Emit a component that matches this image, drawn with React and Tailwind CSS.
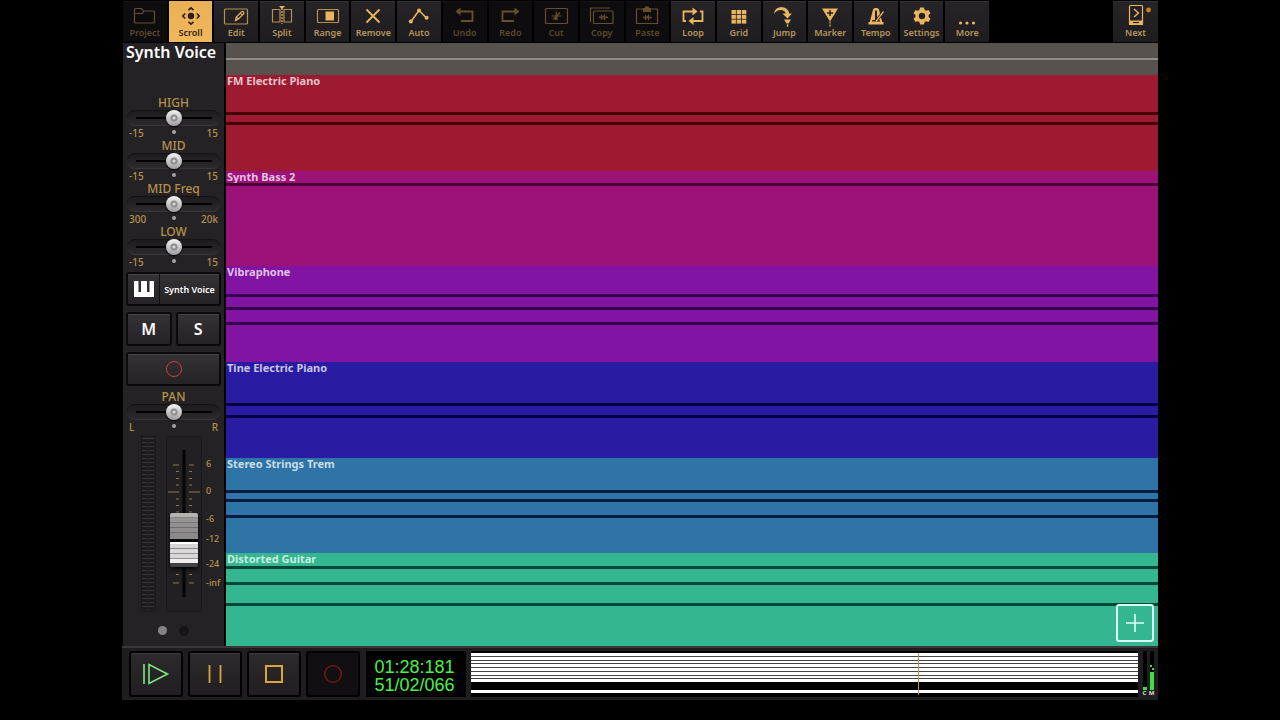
import React from "react";

const TOOLS = [
  { name: "Project", state: "off" },
  { name: "Scroll", state: "active" },
  { name: "Edit" },
  { name: "Split" },
  { name: "Range" },
  { name: "Remove" },
  { name: "Auto" },
  { name: "Undo", state: "off" },
  { name: "Redo", state: "off" },
  { name: "Cut", state: "off" },
  { name: "Copy", state: "off" },
  { name: "Paste", state: "off" },
  { name: "Loop" },
  { name: "Grid" },
  { name: "Jump" },
  { name: "Marker" },
  { name: "Tempo" },
  { name: "Settings" },
  { name: "More" },
];

const LANES = [
  { name: "FM Electric Piano", box: "h-[96px] bg-[#9d1a31]", line: "bg-[#450008]", notes: [37, 47] },
  { name: "Synth Bass 2", box: "h-[95px] bg-[#9d1279]", line: "bg-[#480037]", notes: [12] },
  { name: "Vibraphone", box: "h-[96px] bg-[#8214a4]", line: "bg-[#35004a]", notes: [28, 41, 56] },
  { name: "Tine Electric Piano", box: "h-[96px] bg-[#291ca2]", line: "bg-[#05003f]", notes: [41, 53] },
  { name: "Stereo Strings Trem", box: "h-[95px] bg-[#2e74a6]", line: "bg-[#051c42]", notes: [32, 41, 57] },
  { name: "Distorted Guitar", box: "h-[93px] bg-[#34b791]", line: "bg-[#05463a]", notes: [13, 29, 50] },
];

const EQ = [
  { name: "HIGH", low: "-15", high: "15" },
  { name: "MID", low: "-15", high: "15" },
  { name: "MID Freq", low: "300", high: "20k" },
  { name: "LOW", low: "-15", high: "15" },
];

const WAVE = "M-4 0h1M-3 -1v2M-1.5 -2.5v5M0 -1.5v3M1.5 -3v6M3 -1v2M3 0h2";

const ICONS = {
  Project: (
    <path d="M3.5 21V7.5q0-1 1-1h6l2 2.5h10q1 0 1 1V20q0 1-1 1h-18q-1 0-1-1M3.5 11.5h8l1.5-2.5" />
  ),
  Scroll: (
    <>
      <circle cx="14" cy="14" r="3.2" fill="currentColor" stroke="none" />
      <path strokeWidth="1.6" d="M11.5 8.2 14 5.8l2.5 2.4M11.5 19.8l2.500 2.400 2.500-2.400M8.200 11.500 5.800 14l2.400 2.500M19.800 11.500l2.400 2.500-2.400 2.500" />
    </>
  ),
  Edit: (
    <>
      <rect x="2.5" y="7" width="23" height="15" rx="1" strokeOpacity="0.75" />
      <path d="m13.5 18.500 .8-3.5 5.2-5.2q1-1 2 0t0 2l-5.2 5.2zM18.2 11.1l2 2M14.4 15.1l2 2" />
    </>
  ),
  Split: (
    <>
      <path strokeOpacity="0.75" d="M12 7.5H4.500v12.500H12zM16 7.500h7.500v12.500H16z" />
      <path strokeDasharray="2 1" d="M14 6v16" />
      <path fill="currentColor" stroke="none" d="M11 4h6l-3 3.200z" />
    </>
  ),
  Range: (
    <>
      <rect x="3.5" y="7.500" width="21" height="13" rx="1" strokeOpacity="0.75" />
      <rect x="11.5" y="9.500" width="8.5" height="9" fill="currentColor" stroke="none" />
    </>
  ),
  Remove: <path strokeWidth="1.8" d="m7.5 7.5 13 13M20.5 7.5l-13 13" />,
  Auto: (
    <>
      <path strokeWidth="1.5" d="m6 19.5 8-11 7.5 7.5" />
      <g fill="currentColor" stroke="none">
        <circle cx="5.8" cy="19.6" r="2" />
        <circle cx="14" cy="8.5" r="2" />
        <circle cx="21.6" cy="15.8" r="2" />
      </g>
    </>
  ),
  Undo: (
    <>
      <path strokeWidth="1.8" d="M8 9.5h13.5v9.500H10" />
      <path fill="currentColor" stroke="none" d="m4.5 9.5 5-4v8z" />
    </>
  ),
  Redo: (
    <>
      <path strokeWidth="1.8" d="M19 9.5H6.5V19H18" />
      <path fill="currentColor" stroke="none" d="m23.5 9.5-5-4v8z" />
    </>
  ),
  Cut: (
    <>
      <rect x="3.5" y="6.500" width="22" height="15" rx="1" />
      <path d="M9.5 14h10M14.5 10l-1 8M18 10.500l-7 7M15 14v4" />
    </>
  ),
  Copy: (
    <>
      <rect x="5.5" y="9" width="19.5" height="12.5" rx="1" />
      <path d="M2.5 20V6H22" />
      <path transform="translate(15 15.300)" d={WAVE} />
    </>
  ),
  Paste: (
    <>
      <path d="M10 7H3.5v14.500h21V7H18" />
      <path fill="currentColor" stroke="none" d="M10 6h2V4.500h4V6h2v4h-8z" />
      <path transform="translate(14 15.500)" d={WAVE} />
    </>
  ),
  Loop: (
    <>
      <path strokeWidth="1.8" d="M7 19H4.500V9.500h10M21 9.500h2.500V19h-10" />
      <path fill="currentColor" stroke="none" d="m18.500 9.500-5-4v8zM9.500 19l5-4v8z" />
    </>
  ),
  Grid: (
    <g fill="currentColor" stroke="none">
      {[0, 1, 2].map((r) =>
        [0, 1, 2].map((c) => <rect key={`${r}${c}`} x={6.5 + c * 5.2} y={8 + r * 4.8} width="4.4" height="4" />)
      )}
    </g>
  ),
  Jump: (
    <g fill="currentColor" stroke="none">
      <path d="M4 12Q4.500 5.500 11 5q7 0 8.200 6.500h2.800l-4.500 5-5-5h3.200q-1-3.500-5-3.500Q6.500 8 4 12z" />
      <path d="M14 17.500h7l-2.500 4h-2z" />
      <rect x="16.900" y="22.300" width="1.300" height="2.500" />
    </g>
  ),
  Marker: (
    <>
      <path fill="currentColor" stroke="none" d="M6 6.5h16l-8 13z" />
      <path className="text-[#222023]" strokeWidth="1.5" d="M14 8v6M11 11h6" />
      <path d="M14 19.500v2M14 22.500v2" />
    </>
  ),
  Tempo: (
    <>
      <path
        fill="currentColor"
        stroke="none"
        fillRule="evenodd"
        d="M6.500 22.500v-2.500h1.300L11 7.500q.6-1.500 2-1.500h2q1.400 0 2 1.500l3.200 12.500h1.300v2.500zM13 8.500v9.500h2V8.500zM10 19.500h8l-.4-1.500h-7.200z"
      />
      <path stroke="#222023" strokeWidth="3" d="m15 18 6-7.500" />
      <path strokeWidth="1.3" d="M14 19.500 21.500 9.500" />
    </>
  ),
  Settings: (
    <g stroke="none" fill="currentColor">
      <path
        fillRule="evenodd"
        d="M12 5.500h4l.6 2.500 1.500.8 2.400-.9 2 3.400-1.900 1.800v1.800l1.900 1.800-2 3.400-2.400-.9-1.500.8-.6 2.500h-4l-.6-2.500-1.500-.8-2.400.9-2-3.400 1.900-1.800v-1.800l-1.900-1.800 2-3.400 2.400.9 1.500-.8zM14 10.800a3.200 3.200 0 1 0 0 6.400 3.200 3.200 0 0 0 0-6.400z"
      />
    </g>
  ),
  More: (
    <g fill="currentColor" stroke="none">
      <circle cx="7.5" cy="21" r="1.600" />
      <circle cx="14" cy="21" r="1.600" />
      <circle cx="20.500" cy="21" r="1.600" />
    </g>
  ),
  Next: (
    <>
      <rect x="7.5" y="3.500" width="13" height="18.500" rx="1" />
      <path fill="currentColor" stroke="none" d="M7 18.500h14V23H7z" />
      <path className="text-[#222023]" d="M11 20.500h6" />
      <path strokeWidth="1.500" d="m12 7 4.500 4-4.500 4" />
      <circle cx="26.500" cy="8" r="2.400" className="text-[#c9821f]" fill="currentColor" stroke="none" />
    </>
  ),
};

const TONES = {
  on: "bg-linear-to-b from-[#262426] to-[#1e1c1f] text-[#e9b55e] border-[#333134]",
  off: "bg-[#0e0c0e] text-[#65502b] border-[#171517]",
  active: "bg-linear-to-b from-[#eab055] to-[#f0b75c] text-[#2a2018] border-[#eab055]",
};
const LABEL_TONES = { on: "text-[#b4975a]", off: "text-[#5b4a2b]", active: "text-[#32240f]" };

function ToolButton({ name, state = "on" }) {
  return (
    <button className={`flex min-w-0 flex-1 flex-col items-center border-t ${TONES[state]}`}>
      <svg viewBox="0 0 28 28" className="h-7 w-7 shrink-0 overflow-visible" fill="none" stroke="currentColor" strokeWidth="1.2">
        {ICONS[name]}
      </svg>
      <span className={`-mt-[3px] text-[9px] leading-3 font-semibold ${LABEL_TONES[state]}`}>{name}</span>
    </button>
  );
}

function Knob({ name, low, high }) {
  return (
    <label className="block h-[43px] text-[#b4924c]">
      <span className="block text-center text-xs leading-[14px] font-medium">{name}</span>
      <span className="mx-1 flex h-4 items-center rounded-lg border-t border-b border-t-[#131214] border-b-[#39373a] bg-linear-to-b from-[#1d1b1e] to-[#2c2a2d]">
        <input
          type="range"
          defaultValue="50"
          className="h-4 w-full cursor-pointer appearance-none bg-transparent [&::-webkit-slider-runnable-track]:h-4 [&::-webkit-slider-runnable-track]:bg-[linear-gradient(#000,#000)] [&::-webkit-slider-runnable-track]:bg-[length:76px_2px] [&::-webkit-slider-runnable-track]:bg-center [&::-webkit-slider-runnable-track]:bg-no-repeat [&::-webkit-slider-thumb]:size-4 [&::-webkit-slider-thumb]:appearance-none [&::-webkit-slider-thumb]:rounded-full [&::-webkit-slider-thumb]:bg-[radial-gradient(circle,#d8d8d8_0_1px,#8b8b8b_2px_3px,transparent_4px),linear-gradient(#f4f4f4,#9c9c9c)] [&::-webkit-slider-thumb]:shadow-[0_1px_2px_#000]"
        />
      </span>
      <span className="mx-[6px] grid grid-cols-[1fr_auto_1fr] text-[10px] leading-[15px] font-medium">
        <span>{low}</span>
        <span className="mt-[4px] size-1 rounded-full bg-[#a5a3a4]" />
        <span className="text-right">{high}</span>
      </span>
    </label>
  );
}

const TICKS = [464, 470.5, 477.5, 484, 491, 498, 504.5, 511, 573.5, 582];

function Fader() {
  return (
    <div className="mt-[3px] flex h-[176px] pl-[18px]">
      <div className="grid w-[15px] grid-cols-2 gap-x-px border border-[#1a191b] p-px">
        {[0, 1].map((c) => (
          <div key={c} className="bg-[repeating-linear-gradient(#39373a_0_1px,#1b1a1c_1px_4px)]" />
        ))}
      </div>
      <div className="relative ml-[10px] w-[36px] rounded-sm border border-[#171618] bg-[#222023]">
        <svg viewBox="166 436 34 174" className="absolute inset-0 h-[174px] w-[34px]">
          <path d="M183 449v147" stroke="#050505" strokeWidth="3" />
          {TICKS.map((y) => (
            <path
              key={y}
              d={
                y === 491
                  ? `M167 ${y}h11M188 ${y}h11`
                  : y === 464 || y === 582
                    ? `M172 ${y}h6M188 ${y}h5`
                    : `M175 ${y}h3M188 ${y}h3`
              }
              stroke="#8d7643"
            />
          ))}
        </svg>
        <input
          type="range"
          aria-label="Volume"
          defaultValue="37"
          className="relative block h-[174px] w-[34px] cursor-pointer appearance-none bg-transparent [direction:rtl] [writing-mode:vertical-lr] [&::-webkit-slider-thumb]:h-[54px] [&::-webkit-slider-thumb]:w-[28px] [&::-webkit-slider-thumb]:appearance-none [&::-webkit-slider-thumb]:rounded-[2px] [&::-webkit-slider-thumb]:bg-[linear-gradient(#b4b2b3_0_4px,#858384_4px_5px,#969495_5px_9px,#757374_9px_10px,#929091_10px_14px,#6f6d6e_14px_15px,#8f8d8e_15px_19px,#706e6f_19px_20px,#8b898a_20px_26px,#080808_26px_29px,#fff_29px_31px,#d6d4d5_31px_35px,#898788_35px_36px,#dad8d9_36px_40px,#949293_40px_41px,#d8d6d7_41px_45px,#949293_45px_46px,#f0eeef_46px_50px,#444244_50px_54px)] [&::-webkit-slider-thumb]:shadow-[0_2px_4px_#000]"
        />
      </div>
      <div className="ml-1 flex flex-col text-[9px] leading-[10px] font-medium text-[#b4924c]">
        <span className="mt-[23px]">6</span>
        <span className="mt-[17px]">0</span>
        <span className="mt-[18px]">-6</span>
        <span className="mt-[10px]">-12</span>
        <span className="mt-[15px]">-24</span>
        <span className="mt-[9px]">-inf</span>
      </div>
    </div>
  );
}

const PAD = "rounded-[3px] border-2 border-[#0b0a0b] bg-linear-to-b from-[#343235] to-[#252326] text-white shadow-[inset_0_1px_0_#454346]";

function Channel() {
  return (
    <aside className="w-[104px] shrink-0 border-r-2 border-l border-black bg-[#242225]">
      <h1 className="h-[53px] pl-[3px] text-base leading-[19px] font-semibold whitespace-nowrap text-white">Synth Voice</h1>
      {EQ.map((k) => (
        <Knob key={k.name} {...k} />
      ))}
      <div className="mx-[3px] mt-[4px] flex flex-col gap-[6px]">
        <button className={`flex h-[34px] items-stretch ${PAD}`}>
          <span className="flex w-[32px] items-center justify-center border-r border-[#111]">
            <svg viewBox="0 0 20 16" className="h-4 w-5">
              <path fill="#fff" d="M0 0h4.500v11h2.500V0h6v11h2.500V0H20v16H0z" />
            </svg>
          </span>
          <span className="flex flex-1 items-center justify-center pt-[2px] text-[9px] font-semibold whitespace-nowrap">
            Synth Voice
          </span>
        </button>
        <div className="grid grid-cols-2 gap-1">
          <button className={`h-[34px] text-base leading-5 font-semibold ${PAD}`}>M</button>
          <button className={`h-[34px] text-base leading-5 font-semibold ${PAD}`}>S</button>
        </div>
        <button aria-label="Arm track" className={`flex h-[34px] items-center justify-center ${PAD}`}>
          <span className="size-4 rounded-full border border-[#d63c33]" />
        </button>
      </div>
      <div className="mt-[4px]">
        <Knob name="PAN" low="L" high="R" />
      </div>
      <Fader />
      <div className="flex h-[34px] items-center gap-3 pt-[3px] pl-[35px]">
        <span className="size-[9px] rounded-full bg-[#848283]" />
        <span className="size-[10px] rounded-full bg-[#151416]" />
      </div>
    </aside>
  );
}

function Arrangement() {
  return (
    <main className="relative flex min-w-0 flex-1 flex-col">
      <div className="h-8 bg-[#57524e] pt-[15px]">
        <div className="h-[2px] bg-[#918c86]" />
      </div>
      {LANES.map((lane) => (
        <section key={lane.name} className={`relative ${lane.box}`}>
          <h2 className="pl-px text-[11px] leading-3 font-bold text-white/75">{lane.name}</h2>
          {lane.notes.map((top) => (
            <div key={top} className={`absolute inset-x-0 h-[3px] ${lane.line}`} style={{ top }} />
          ))}
        </section>
      ))}
      <button
        aria-label="Add track"
        className="absolute right-1 bottom-1 flex size-[38px] items-center justify-center rounded-[3px] border-2 border-[#dcfff5]"
      >
        <svg viewBox="0 0 20 20" className="size-5">
          <path d="M10 1v18M1 10h18" stroke="#dcfff5" strokeWidth="1.6" />
        </svg>
      </button>
    </main>
  );
}

const TRANSPORT = [
  { name: "Play", icon: <path d="M2 4v20M7 4.500v19L25.500 14z" stroke="#7ce87c" strokeWidth="1.6" /> },
  { name: "Pause", icon: <path d="M8.500 5v18M19.500 5v18" stroke="#dba43c" strokeWidth="1.800" /> },
  { name: "Stop", icon: <path d="M6 6h16v16H6z" stroke="#dba43c" strokeWidth="2" /> },
  { name: "Record", dark: true, icon: <circle cx="14" cy="14" r="8.3" stroke="#821a1a" strokeWidth="1.300" /> },
];

const BARS = ["h-[3px]", "h-[3px]", "h-[2px]", "h-[3px]", "h-[3px]", "h-[3px]", "h-[2px]", "h-[3px]"];

function Transport() {
  return (
    <footer className="flex h-[54px] items-stretch border-t-2 border-[#39373a] bg-[#1f1d20] px-[2px] pt-[3px] pb-[3px]">
      <div className="flex gap-[5px] pl-[5px]">
        {TRANSPORT.map((b) => (
          <button
            key={b.name}
            aria-label={b.name}
            className={`flex w-[54px] items-center justify-center rounded-[3px] border-2 border-black ${
              b.dark ? "bg-[#110f12]" : "bg-linear-to-b from-[#2c2a2d] to-[#201e21] shadow-[inset_0_1px_0_#3d3b3e]"
            }`}
          >
            <svg viewBox="0 0 28 28" className="size-7" fill="none">
              {b.icon}
            </svg>
          </button>
        ))}
      </div>
      <div className="ml-[6px] flex w-[100px] flex-col items-center justify-center bg-black pt-[3px] pr-[3px] font-['Liberation_Sans',Arial,sans-serif] text-lg leading-[18px] text-[#4cf04c]">
        <span>01:28:181</span>
        <span>51/02/066</span>
      </div>
      <div className="relative ml-[5px] min-w-0 flex-1 bg-black pt-[2px]">
        <div className="flex flex-col gap-px bg-[#444]">
          {BARS.map((h, i) => (
            <div key={i} className={`bg-white ${h}`} />
          ))}
        </div>
        <div className="mt-[8px] h-[3px] bg-white" />
        <div className="absolute inset-y-[2px] left-[67%] w-px bg-[#b8924f]" />
      </div>
      <div className="ml-1 flex gap-[2px] pr-[2px] text-center text-[6px] leading-[7px] font-bold text-[#ddd]">
        <div className="flex w-[5px] flex-col items-center">
          <div className="flex w-1 flex-1 flex-col justify-end bg-black">
            <div className="h-[3px] bg-[#41dc41]" />
          </div>
          C
        </div>
        <div className="flex w-[5px] flex-col items-center">
          <div className="flex w-1 flex-1 flex-col justify-end bg-black">
            <div className="mb-px h-[2px] w-[2px] bg-[#41dc41]" />
            <div className="mb-[2px] ml-[2px] h-[2px] w-[2px] bg-[#41dc41]" />
            <div className="h-[18px] bg-[#41dc41]" />
          </div>
          M
        </div>
      </div>
    </footer>
  );
}

export default function App() {
  return (
    <div className="min-h-screen bg-black px-[122px] font-['Noto_Sans',sans-serif]">
      <nav className="flex h-[43px] pt-px pb-px pl-px">
        <div className="flex min-w-0 flex-[866] gap-[2px]">
          {TOOLS.map((t) => (
            <ToolButton key={t.name} {...t} />
          ))}
        </div>
        <div className="flex-[124]" />
        <div className="flex min-w-0 flex-[45]">
          <ToolButton name="Next" />
        </div>
      </nav>
      <div className="flex">
        <Channel />
        <Arrangement />
      </div>
      <Transport />
    </div>
  );
}
